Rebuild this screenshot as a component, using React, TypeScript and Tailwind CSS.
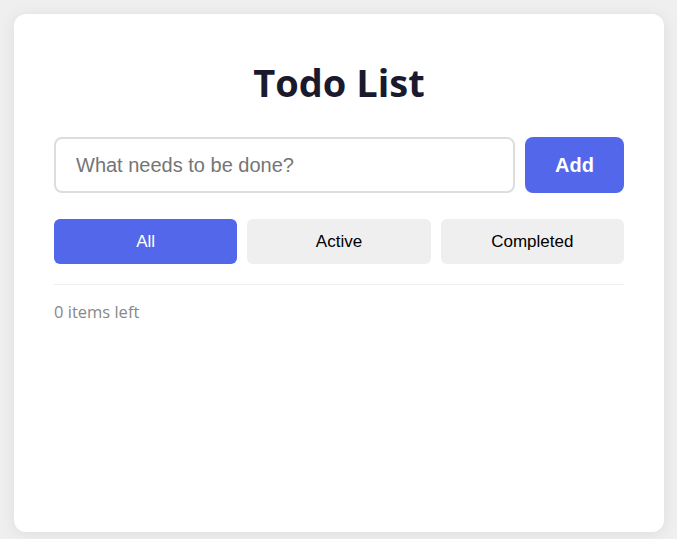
import React from "react";

export default function App() {
  return (
    <div className="min-h-screen h-[539px] bg-[#efefef] pt-[14px] pl-[14px]">
      <div className="h-[518px] w-[650px] rounded-xl bg-white px-10 pt-10 shadow-[0_2px_16px_rgba(0,0,0,0.08)]">
        <h1 className="mt-[4px] mb-[31px] text-center text-[38px] font-bold leading-[48px] text-[#1a1a2e] [font-family:'Open_Sans',sans-serif]">
          Todo List
        </h1>
        <div className="flex gap-[10px] [font-family:'Liberation_Sans',Arial,sans-serif]">
          <input
            type="text"
            placeholder="What needs to be done?"
            className="h-[56px] min-w-0 flex-1 rounded-lg border-2 border-[#ddd] bg-white px-[20px] text-[20px] text-[#333] placeholder:text-[#757575] outline-none"
          />
          <button className="h-[56px] w-[99px] rounded-lg bg-[#5367eb] text-[20px] font-bold text-white">
            Add
          </button>
        </div>
        <div className="mt-[26px] flex gap-[10px] [font-family:'Liberation_Sans',Arial,sans-serif]">
          <button className="h-[45px] flex-1 rounded-md bg-[#5367eb] text-[17px] text-white">
            All
          </button>
          <button className="h-[45px] flex-1 rounded-md bg-[#efefef] text-[17px] text-black">
            Active
          </button>
          <button className="h-[45px] flex-1 rounded-md bg-[#efefef] text-[17px] text-black">
            Completed
          </button>
        </div>
        <div className="mt-[20px] h-px bg-[#eeeeee]" />
        <div className="pt-[15px] text-[16.5px] leading-[23px] text-[#888] [font-family:'Open_Sans',sans-serif]">
          0 items left
        </div>
      </div>
    </div>
  );
}
